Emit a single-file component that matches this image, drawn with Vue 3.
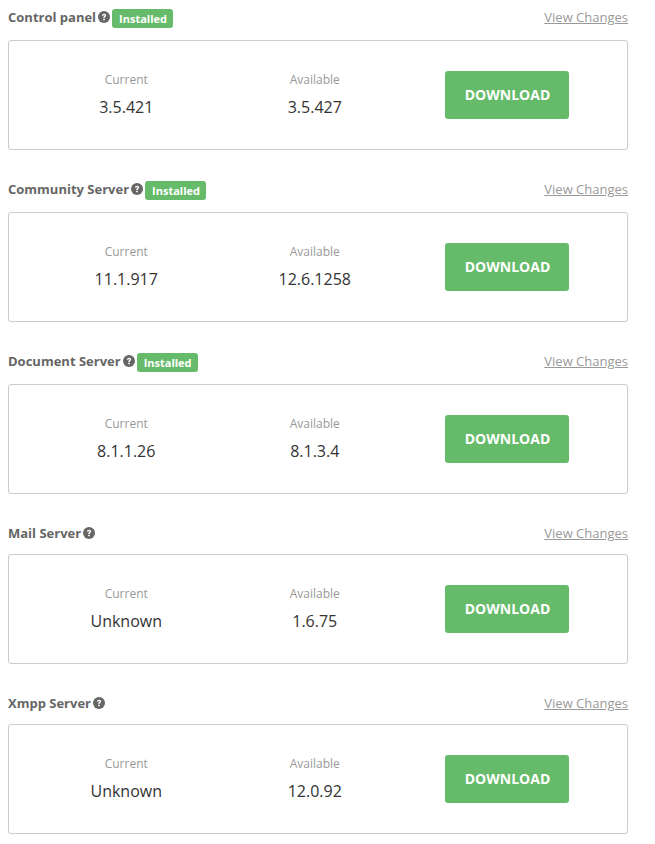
<script setup>
const items = [
  { name: 'Control panel', installed: true, current: '3.5.421', available: '3.5.427' },
  { name: 'Community Server', installed: true, current: '11.1.917', available: '12.6.1258' },
  { name: 'Document Server', installed: true, current: '8.1.1.26', available: '8.1.3.4' },
  { name: 'Mail Server', installed: false, current: 'Unknown', available: '1.6.75' },
  { name: 'Xmpp Server', installed: false, current: 'Unknown', available: '12.0.92' }
]
</script>

<template>
  <div class="page">
    <section v-for="item in items" :key="item.name" class="section">
      <header class="head" :class="{ tall: item.installed }">
        <span class="title">{{ item.name }}</span>
        <svg class="help" viewBox="0 0 12 12" width="12" height="12" aria-hidden="true">
          <circle cx="6" cy="6" r="6" fill="#666665" />
          <path d="M4 4.7C4 3.5 4.9 2.8 6.1 2.8C7.3 2.8 8.1 3.5 8.1 4.4C8.1 5.6 6.7 5.7 6.7 7H5.3C5.3 5.3 6.6 5.2 6.6 4.5C6.6 4.1 6.4 4 6 4C5.6 4 5.4 4.3 5.4 4.7Z" fill="#fff" />
          <rect x="5.2" y="7.7" width="1.6" height="1.5" fill="#fff" />
        </svg>
        <span v-if="item.installed" class="badge">Installed</span>
        <a class="changes">View Changes</a>
      </header>
      <div class="card">
        <div class="col">
          <div class="label">Current</div>
          <div class="value">{{ item.current }}</div>
        </div>
        <div class="col">
          <div class="label">Available</div>
          <div class="value">{{ item.available }}</div>
        </div>
        <button class="download">DOWNLOAD</button>
      </div>
    </section>
  </div>
</template>

<style scoped>
.page {
  width: 620px;
  padding: 8px 27px 0 8px;
  font-family: "Open Sans", sans-serif;
  color: #333;
}
.section {
  margin-bottom: 30px;
}
.head {
  display: flex;
  align-items: center;
  height: 18px;
  margin-bottom: 12px;
}
.head.tall {
  box-sizing: border-box;
  height: 20px;
  padding-bottom: 2px;
}
.title {
  font-size: 13px;
  font-weight: 700;
  color: #666665;
}
.help {
  margin-left: 2px;
  flex: none;
}
.badge {
  align-self: flex-end;
  margin: 0 0 -2px 2px;
  height: 19px;
  line-height: 19px;
  padding: 0 6px 0 7px;
  border-radius: 3px;
  background: #66bb6a;
  color: #fff;
  font-size: 11px;
  font-weight: 700;
}
.changes {
  margin-left: auto;
  font-size: 13px;
  color: #999;
  text-decoration: underline;
}
.card {
  box-sizing: border-box;
  height: 110px;
  display: flex;
  align-items: center;
  border: 1px solid #ccc;
  border-radius: 3px;
  background: #fff;
  padding-left: 23px;
}
.col {
  align-self: flex-start;
  width: 188.5px;
  padding-top: 32px;
  text-align: center;
}
.label {
  font-size: 12px;
  line-height: 14px;
  color: #999;
}
.value {
  margin-top: 9px;
  font-size: 16px;
  line-height: 22px;
  color: #333;
}
.download {
  margin-left: 36px;
  width: 124px;
  height: 48px;
  padding: 0 0 2px 1px;
  border: 0;
  border-radius: 3px;
  background: #66bb6a;
  color: #fff;
  font-family: inherit;
  font-size: 14px;
  font-weight: 700;
}
</style>
